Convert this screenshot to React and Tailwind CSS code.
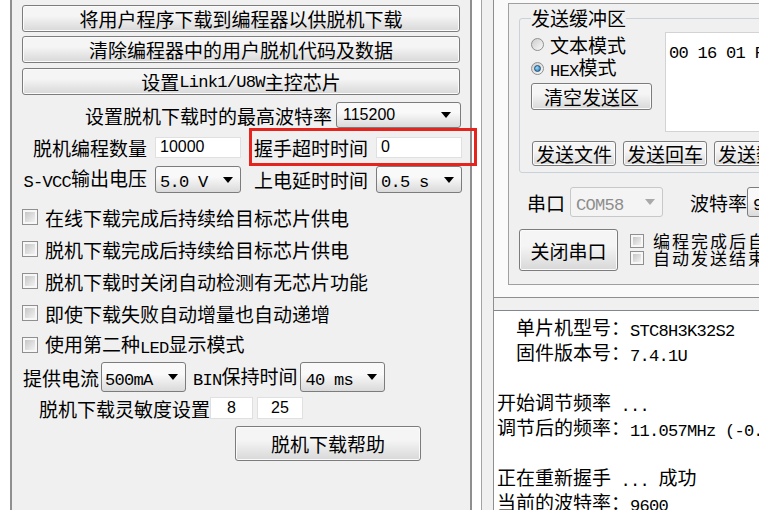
import React from 'react';

// ASCII runs are drawn half-width, like the SimSun latin glyphs in the original
const Mix = ({ text }) =>
  text.split(/([\x20-\x7e]+)/).map((part, i) =>
    i % 2 ? (
      <span
        key={i}
        className="relative top-[1px] font-['Liberation_Mono',monospace] text-[0.9em] tracking-[-0.045em]"
      >
        {part}
      </span>
    ) : (
      part
    )
  );

const Arrow = ({ color = '#000' }) => (
  <svg width="10" height="6" viewBox="0 0 10 6" className="shrink-0">
    <path d="M0 0h10L5 6z" fill={color} />
  </svg>
);

const Btn = ({ className = '', children }) => (
  <div
    className={`flex items-center justify-center whitespace-nowrap rounded-[3px] border border-[#7c7c7c] bg-linear-to-b from-[#f5f5f5] from-40% to-[#d8d8d8] leading-none shadow-[inset_0_0_0_1px_#fbfbfb] ${className}`}
  >
    {children}
  </div>
);

const Select = ({ className = '', disabled = false, children }) => (
  <div
    className={`flex shrink-0 items-center justify-between rounded-[3px] border pr-[7px] leading-none ${
      disabled
        ? 'border-[#c8c8c8] bg-[#f4f4f4] text-[#8d8d8d]'
        : 'border-[#7c7c7c] bg-linear-to-b from-[#f9f9f9] from-40% to-[#dadada] text-black'
    } ${className}`}
  >
    <span className="whitespace-nowrap">{children}</span>
    <Arrow color={disabled ? '#a9a9a9' : '#000'} />
  </div>
);

const Field = ({ className = '', children }) => (
  <div
    className={`flex shrink-0 items-center border border-[#e0e0e0] bg-white font-['Liberation_Sans',sans-serif] text-[16px] leading-none ${className}`}
  >
    {children}
  </div>
);

const Box = ({ className = '' }) => (
  <span className={`flex shrink-0 border border-[#8f8f8f] bg-[#f7f7f7] p-[2px] ${className}`}>
    <span className="block h-full w-full bg-linear-to-br from-[#c6c6c6] to-[#f2f2f2]" />
  </span>
);

const Radio = ({ on = false }) => (
  <span className="flex size-[13px] shrink-0 items-center justify-center rounded-full border border-[#8f8f8f] bg-linear-to-br from-[#cdcdcd] to-[#fafafa]">
    {on && (
      <span className="size-[7px] rounded-full border border-[#1d4f78] bg-radial-[at_35%_35%] from-[#9bdcff] to-[#1f6aa3]" />
    )}
  </span>
);

const options = [
  '在线下载完成后持续给目标芯片供电',
  '脱机下载完成后持续给目标芯片供电',
  '脱机下载时关闭自动检测有无芯片功能',
  '即使下载失败自动增量也自动递增',
  '使用第二种LED显示模式',
];

const logLines = [
  '  单片机型号：STC8H3K32S2',
  '  固件版本号：7.4.1U',
  '',
  '开始调节频率 ...',
  '调节后的频率：11.057MHz (-0.027%)',
  '',
  '正在重新握手 ... 成功',
  '当前的波特率：9600',
];

export default function App() {
  return (
    <div className="relative flex h-[510px] w-[759px] overflow-hidden bg-white font-['Noto_Sans_CJK_SC',sans-serif] text-[19px] text-black">
      <div className="w-[10px] shrink-0 bg-white" />

      {/* Offline download settings */}
      <div className="w-[462px] shrink-0 border-x-2 border-[#8f8f8f] bg-[#f0f0f0] px-[10px] pt-[5px]">
        <Btn className="h-[27px]">将用户程序下载到编程器以供脱机下载</Btn>
        <Btn className="mt-[4px] h-[27px]">清除编程器中的用户脱机代码及数据</Btn>
        <Btn className="mt-[5px] h-[27px]">
          <Mix text="设置Link1/U8W主控芯片" />
        </Btn>

        <div className="mt-[7px] flex h-[26px] items-center justify-end leading-none">
          <span className="mr-[4px]">设置脱机下载时的最高波特率</span>
          <Select className="-mr-[1px] h-[26px] w-[125px] pl-[6px] pr-[9px] font-['Liberation_Sans',sans-serif] text-[16px]">
            115200
          </Select>
        </div>

        <div className="flex h-[38px] items-center leading-none">
          <span className="w-[125px] shrink-0 text-right">脱机编程数量</span>
          <Field className="ml-[8px] h-[21px] w-[86px] pl-[4px]">10000</Field>
          <span className="w-[127px] shrink-0 text-right">握手超时时间</span>
          <Field className="ml-[8px] h-[21px] w-[86px] pl-[4px]">0</Field>
        </div>

        <div className="flex h-[27px] items-center leading-none">
          <span className="w-[125px] shrink-0 text-right">
            <Mix text="S-VCC输出电压" />
          </span>
          <Select className="ml-[8px] h-[27px] w-[86px] pl-[4px]">
            <Mix text="5.0 V" />
          </Select>
          <span className="w-[127px] shrink-0 text-right">上电延时时间</span>
          <Select className="ml-[8px] h-[27px] w-[86px] pl-[4px]">
            <Mix text="0.5 s" />
          </Select>
        </div>

        <div className="mt-[8px]">
          {options.map((label) => (
            <div key={label} className="flex h-[32px] items-center leading-none">
              <Box className="size-[16px]" />
              <span className="ml-[7px] whitespace-nowrap">
                <Mix text={label} />
              </span>
            </div>
          ))}
        </div>

        <div className="mt-[1px] flex h-[30px] items-center leading-none">
          <span className="ml-[1px] shrink-0">提供电流</span>
          <Select className="ml-[2px] h-[30px] w-[85px] pl-[3px]">
            <Mix text="500mA" />
          </Select>
          <span className="ml-[7px] shrink-0">
            <Mix text="BIN保持时间" />
          </span>
          <Select className="ml-[2px] h-[30px] w-[85px] pl-[5px]">
            <Mix text="40 ms" />
          </Select>
        </div>

        <div className="mt-[4px] flex h-[24px] items-center leading-none">
          <span className="ml-[17px] shrink-0">脱机下载灵敏度设置</span>
          <Field className="h-[22px] w-[43px] justify-center">8</Field>
          <Field className="ml-[4px] h-[22px] w-[46px] justify-center">25</Field>
        </div>

        <Btn className="ml-[213px] mt-[6px] h-[35px] w-[186px]">脱机下载帮助</Btn>
      </div>

      <div className="w-[9px] shrink-0 bg-white" />
      <div className="w-[12px] shrink-0 border-l border-[#a3a3a3] bg-[#f0f0f0]" />

      {/* Serial assistant + log */}
      <div className="flex min-w-0 flex-1 flex-col overflow-hidden border-l border-[#8e8f8f]">
        <div className="h-[298px] shrink-0 border-b border-[#8e8f8f] bg-[#fafafa] pl-[14px] pt-[3px]">
          <div className="h-[282px] w-[300px] border-y border-l border-[#a0a0a0] bg-[#f0f0f0] pl-[10px] pt-[2px]">
            <fieldset className="w-[300px] rounded-[3px] border border-[#c9d2d8] px-[11px] pb-[6px] pt-[2px]">
              <legend className="px-0 leading-[24px]">发送缓冲区</legend>
              <div className="flex">
                <div className="w-[122px] shrink-0">
                  <div className="flex h-[24px] items-center leading-none">
                    <Radio />
                    <span className="ml-[6px]">文本模式</span>
                  </div>
                  <div className="flex h-[24px] items-center leading-none">
                    <Radio on />
                    <span className="ml-[6px]">
                      <Mix text="HEX模式" />
                    </span>
                  </div>
                  <Btn className="mt-[3px] h-[27px] w-[121px]">清空发送区</Btn>
                </div>
                <div className="ml-[12px] h-[100px] w-[200px] shrink-0 whitespace-nowrap border border-[#d3d3d3] bg-white px-[3px] pt-[4px] leading-[24px]">
                  <Mix text="00 16 01 FF 02 03" />
                </div>
              </div>
              <div className="ml-[1px] mt-[9px] flex gap-[7px]">
                <Btn className="h-[25px] w-[84px] shrink-0">发送文件</Btn>
                <Btn className="h-[25px] w-[84px] shrink-0">发送回车</Btn>
                <Btn className="h-[25px] w-[84px] shrink-0">发送数据</Btn>
              </div>
            </fieldset>

            <div className="ml-[8px] mt-[14px] flex h-[30px] items-center leading-none">
              <span className="shrink-0">串口</span>
              <Select disabled className="ml-[5px] h-[30px] w-[93px] pl-[5px]">
                <Mix text="COM58" />
              </Select>
              <span className="ml-[27px] shrink-0">波特率</span>
              <Select className="h-[30px] w-[100px] pl-[5px]">
                <Mix text="9600" />
              </Select>
            </div>

            <div className="mt-[12px] flex items-start">
              <Btn className="h-[42px] w-[99px] shrink-0">关闭串口</Btn>
              <div className="ml-[12px] mt-[3px] shrink-0">
                <div className="flex h-[17px] items-center">
                  <Box className="size-[14px]" />
                  <span className="ml-[9px] whitespace-nowrap text-[17px] leading-[17px] tracking-[2px]">
                    编程完成后自动打开串口
                  </span>
                </div>
                <div className="flex h-[17px] items-center">
                  <Box className="size-[14px]" />
                  <span className="ml-[9px] whitespace-nowrap text-[17px] leading-[17px] tracking-[2px]">
                    自动发送结束命令
                  </span>
                </div>
              </div>
            </div>
          </div>
        </div>

        <div className="h-[12px] shrink-0 bg-[#f0f0f0]" />

        <div className="flex-1 border-t border-[#828790] bg-white pl-[3px] pt-[3px]">
          {logLines.map((line, i) => (
            <div key={i} className="h-[25px] whitespace-pre leading-[25px]">
              <Mix text={line} />
            </div>
          ))}
        </div>
      </div>

      <div className="absolute left-[249px] top-[128px] h-[38px] w-[228px] border-[3px] border-[#e5241e]" />
    </div>
  );
}
